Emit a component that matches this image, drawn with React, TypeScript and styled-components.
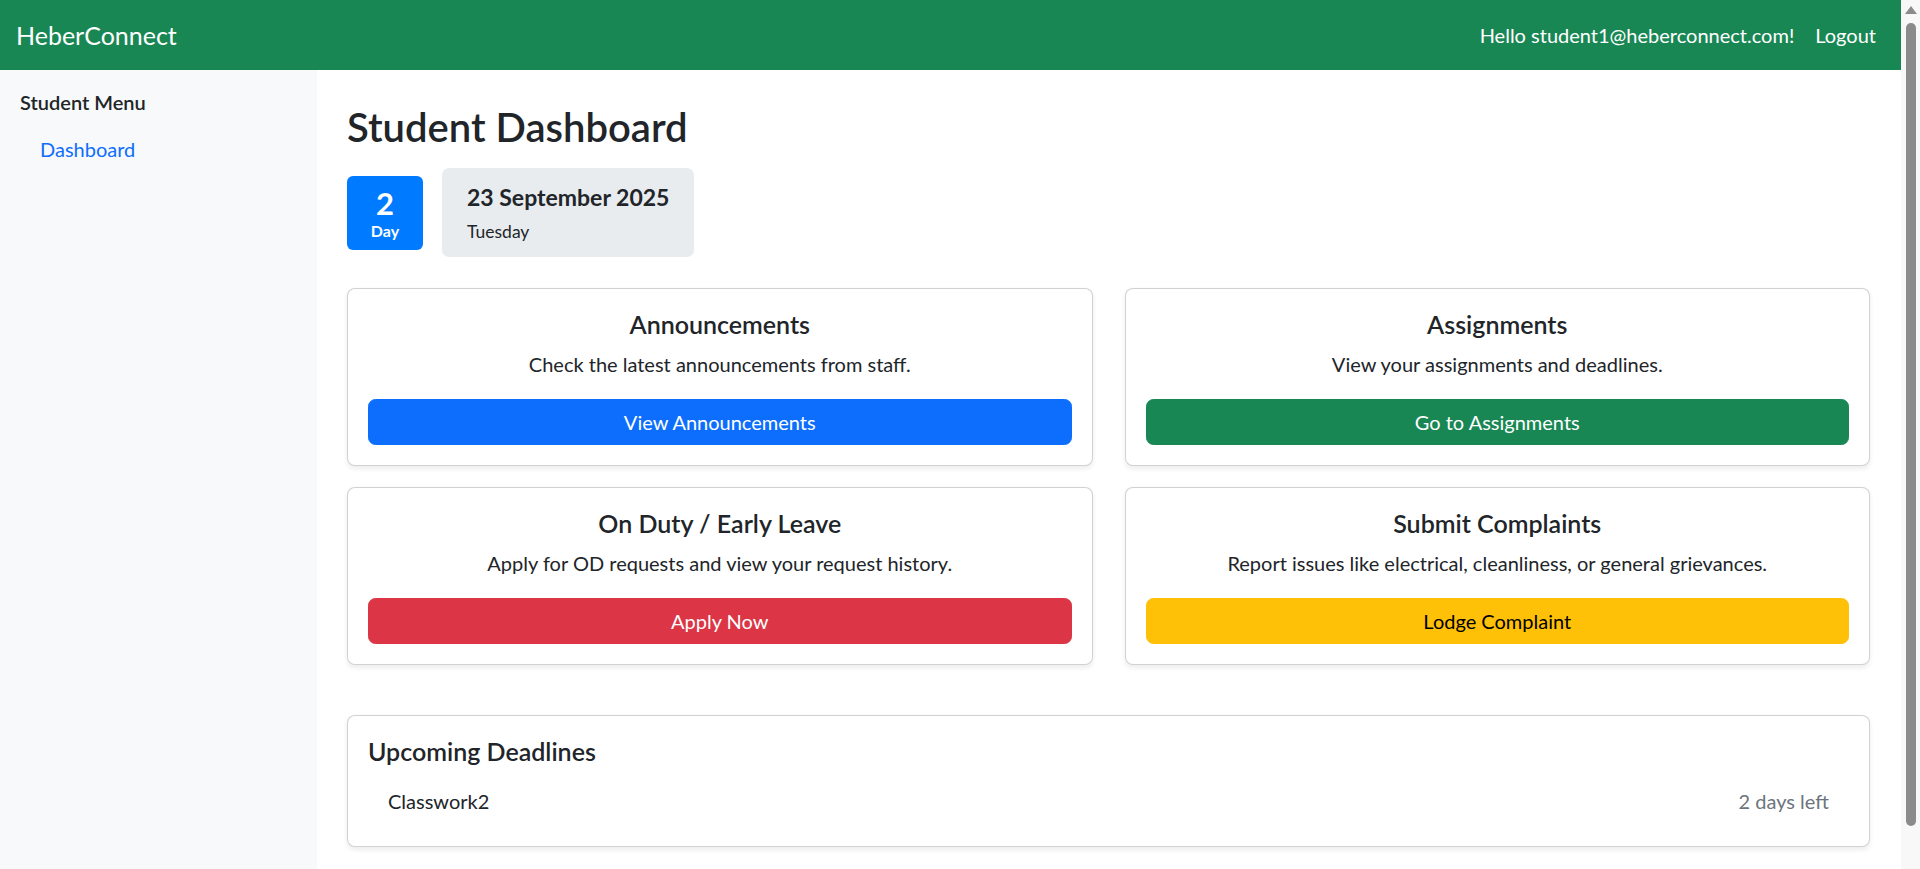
import React from 'react';
import styled, { createGlobalStyle } from 'styled-components';

const GlobalStyle = createGlobalStyle`
  body {
    margin: 0;
    font-family: Lato, 'Noto Sans', sans-serif;
    font-size: 20px;
    line-height: 1.5;
    color: #212529;
    background: #fff;
    overflow: hidden;
  }

  * {
    box-sizing: border-box;
  }
`;

const Shell = styled.div`
  display: flex;
  height: 100vh;
  overflow: hidden;
`;

const Page = styled.div`
  flex: 1;
  min-width: 0;
`;

/* window scrollbar seen at the right edge of the screenshot */
const ScrollRail = styled.div`
  width: 19px;
  flex-shrink: 0;
  background: #f8f8f8;
  display: flex;
  flex-direction: column;
  align-items: center;
  padding-top: 6px;
`;

const ScrollArrow = styled.div`
  width: 0;
  height: 0;
  border-left: 6px solid transparent;
  border-right: 6px solid transparent;
  border-bottom: 8px solid #8b8b8b;
`;

const ScrollThumb = styled.div`
  width: 10px;
  height: 803px;
  margin-top: 9px;
  border-radius: 5px;
  background: #8b8b8b;
`;

const Navbar = styled.header`
  height: 70px;
  background: #198754;
  color: #fff;
  display: flex;
  align-items: center;
  justify-content: space-between;
  padding: 0 25px 0 16px;
`;

const Brand = styled.div`
  font-size: 25px;
  line-height: 1.2;
`;

const NavRight = styled.div`
  display: flex;
  align-items: center;
  gap: 21px;
  font-size: 20px;
`;

const NavLink = styled.a`
  color: #fff;
  text-decoration: none;
  cursor: pointer;
`;

const Layout = styled.div`
  display: grid;
  grid-template-columns: 317px 1fr;
  min-height: 831px;
`;

const Sidebar = styled.aside`
  background: #f8f9fa;
  padding: 20px;
`;

const MenuTitle = styled.h6`
  margin: 0 0 10px;
  font-size: 20px;
  font-weight: 600;
  line-height: 24px;
`;

const SideLink = styled.a`
  display: block;
  padding: 10px 20px;
  color: #0d6efd;
  text-decoration: none;
  cursor: pointer;
`;

const Main = styled.main`
  padding: 33px 31px 30px 30px;
`;

const PageTitle = styled.h2`
  margin: 0 0 17px;
  font-size: 40px;
  font-weight: 600;
  line-height: 48px;
`;

const DateRow = styled.div`
  display: flex;
  align-items: center;
  gap: 19px;
  margin-bottom: 31px;
`;

const DayBadge = styled.div`
  width: 76px;
  height: 74px;
  border-radius: 6px;
  background: #007bff;
  color: #fff;
  display: flex;
  flex-direction: column;
  align-items: center;
  justify-content: center;
  font-weight: 700;
`;

const DayNum = styled.div`
  font-size: 31px;
  line-height: 36px;
`;

const DayLabel = styled.div`
  font-size: 16px;
  line-height: 20px;
`;

const DateCard = styled.div`
  background: #e9ecef;
  border-radius: 7px;
  padding: 16px 25px 12px;
`;

const DateTitle = styled.div`
  font-size: 23px;
  font-weight: 700;
  line-height: 26px;
  margin-bottom: 9px;
`;

const Weekday = styled.div`
  font-size: 17.5px;
  line-height: 26px;
`;

const CardGrid = styled.div`
  display: grid;
  grid-template-columns: 1fr 1fr;
  column-gap: 32px;
  row-gap: 21px;
`;

const Card = styled.section`
  background: #fff;
  border: 1px solid rgba(0, 0, 0, 0.175);
  border-radius: 8px;
  box-shadow: 0 2.5px 5px rgba(0, 0, 0, 0.075);
  padding: 20px;
`;

const ActionCard = styled(Card)`
  text-align: center;
`;

const CardTitle = styled.h5`
  margin: 0 0 10px;
  font-size: 25px;
  font-weight: 600;
  line-height: 30px;
`;

const CardText = styled.p`
  margin: 0 0 20px;
`;

const variants = {
  primary: { bg: '#0d6efd', fg: '#fff' },
  success: { bg: '#198754', fg: '#fff' },
  danger: { bg: '#dc3545', fg: '#fff' },
  warning: { bg: '#ffc107', fg: '#000' },
};

type Variant = keyof typeof variants;

const ActionButton = styled.button<{ $variant: Variant }>`
  display: block;
  width: 100%;
  padding: 7px 15px;
  border: 1px solid ${(p) => variants[p.$variant].bg};
  border-radius: 7.5px;
  background: ${(p) => variants[p.$variant].bg};
  color: ${(p) => variants[p.$variant].fg};
  font-family: inherit;
  font-size: 20px;
  line-height: 30px;
  cursor: pointer;
`;

const DeadlineCard = styled(Card)`
  margin-top: 50px;
`;

const DeadlineList = styled.ul`
  list-style: none;
  margin: 0;
  padding: 0;
`;

const DeadlineItem = styled.li`
  display: flex;
  justify-content: space-between;
  padding: 10px 20px;
`;

const DaysLeft = styled.span`
  color: #6c757d;
`;

const actions: { title: string; text: string; button: string; variant: Variant }[] = [
  {
    title: 'Announcements',
    text: 'Check the latest announcements from staff.',
    button: 'View Announcements',
    variant: 'primary',
  },
  {
    title: 'Assignments',
    text: 'View your assignments and deadlines.',
    button: 'Go to Assignments',
    variant: 'success',
  },
  {
    title: 'On Duty / Early Leave',
    text: 'Apply for OD requests and view your request history.',
    button: 'Apply Now',
    variant: 'danger',
  },
  {
    title: 'Submit Complaints',
    text: 'Report issues like electrical, cleanliness, or general grievances.',
    button: 'Lodge Complaint',
    variant: 'warning',
  },
];

const deadlines = [{ name: 'Classwork2', left: '2 days left' }];

export default function App() {
  return (
    <>
      <GlobalStyle />
      <Shell>
        <Page>
          <Navbar>
            <Brand>HeberConnect</Brand>
            <NavRight>
              <span>Hello student1@heberconnect.com!</span>
              <NavLink>Logout</NavLink>
            </NavRight>
          </Navbar>
          <Layout>
            <Sidebar>
              <MenuTitle>Student Menu</MenuTitle>
              <SideLink>Dashboard</SideLink>
            </Sidebar>
            <Main>
              <PageTitle>Student Dashboard</PageTitle>
              <DateRow>
                <DayBadge>
                  <DayNum>2</DayNum>
                  <DayLabel>Day</DayLabel>
                </DayBadge>
                <DateCard>
                  <DateTitle>23 September 2025</DateTitle>
                  <Weekday>Tuesday</Weekday>
                </DateCard>
              </DateRow>
              <CardGrid>
                {actions.map((a) => (
                  <ActionCard key={a.title}>
                    <CardTitle>{a.title}</CardTitle>
                    <CardText>{a.text}</CardText>
                    <ActionButton $variant={a.variant}>{a.button}</ActionButton>
                  </ActionCard>
                ))}
              </CardGrid>
              <DeadlineCard>
                <CardTitle>Upcoming Deadlines</CardTitle>
                <DeadlineList>
                  {deadlines.map((d) => (
                    <DeadlineItem key={d.name}>
                      <span>{d.name}</span>
                      <DaysLeft>{d.left}</DaysLeft>
                    </DeadlineItem>
                  ))}
                </DeadlineList>
              </DeadlineCard>
            </Main>
          </Layout>
        </Page>
        <ScrollRail>
          <ScrollArrow />
          <ScrollThumb />
        </ScrollRail>
      </Shell>
    </>
  );
}
